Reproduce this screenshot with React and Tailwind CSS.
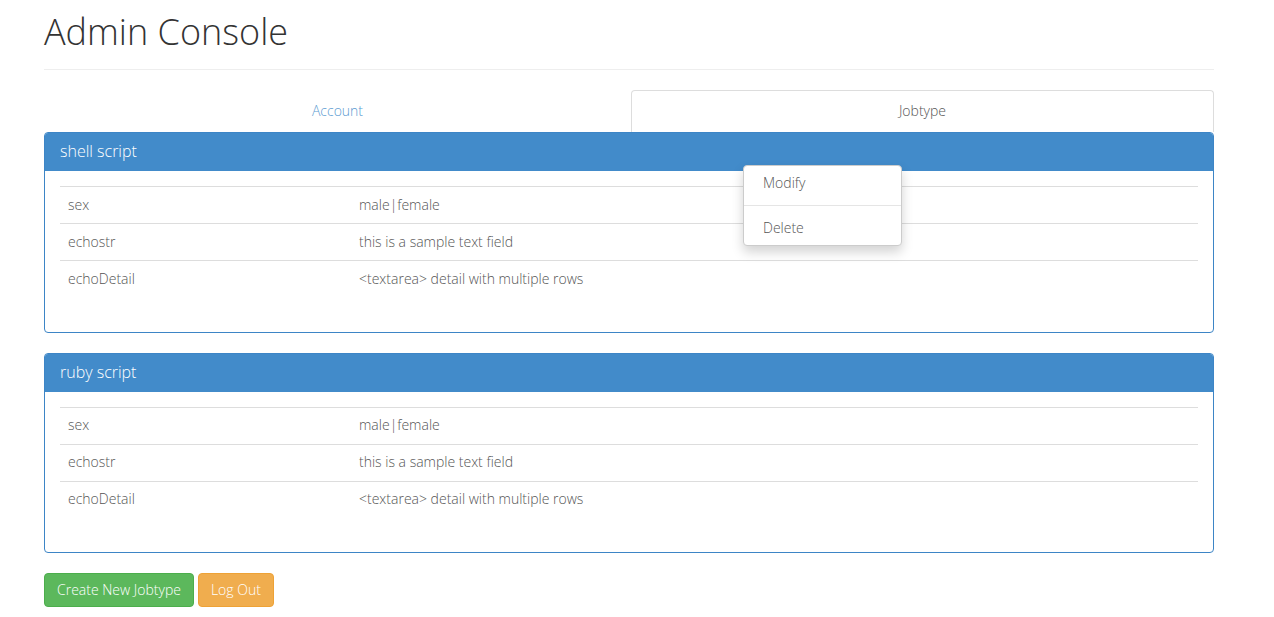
import React from "react";

const fields = [
  { name: "sex", value: "male|female" },
  { name: "echostr", value: "this is a sample text field" },
  { name: "echoDetail", value: "<textarea> detail with multiple rows" },
];

const JobPanel = ({ title }) => (
  <div className="mb-5 rounded border border-[#3d85c6] bg-white">
    <div className="flex h-[38px] items-center rounded-t-[3px] bg-[#428bca] px-[15px] pb-[2px] text-[16px] text-white">
      {title}
    </div>
    <div className="p-[15px]">
      <table className="mb-[19px] w-full border-collapse">
        <tbody>
          {fields.map((f) => (
            <tr key={f.name} className="border-t border-[#dddddd]">
              <td className="h-[37px] w-[291px] px-2 pb-[2px] align-middle">{f.name}</td>
              <td className="h-[37px] px-2 pb-[2px] align-middle">{f.value}</td>
            </tr>
          ))}
        </tbody>
      </table>
    </div>
  </div>
);

const App = () => {
  return (
    <div
      className="min-h-screen bg-white text-[14px] font-light text-[#555555]"
      style={{ fontFamily: '"Open Sans", "Noto Sans", sans-serif' }}
    >
      <div className="mx-auto w-[1170px] -translate-x-[8px]">
        <h1 className="pt-[10px] pb-[15px] text-[36px] leading-[44px] font-light text-[#333333]">
          Admin Console
        </h1>
        <div className="border-b border-[#eeeeee]" />
        <div className="mt-[20px] flex">
          <div className="flex h-[41px] w-[587px] items-center justify-center pb-[0px] text-[#5b9bd1]">
            Account
          </div>
          <div className="flex h-[42px] flex-1 items-center justify-center rounded-t border border-b-0 border-[#dddddd] bg-white pb-[2px] text-[#555555]">
            Jobtype
          </div>
        </div>
        <div className="relative">
          <JobPanel title="shell script" />
          <div className="absolute left-[699px] top-[33px] w-[159px] rounded border border-[#cccccc] bg-white py-[5px] shadow-[0_6px_12px_rgba(0,0,0,0.175)]">
            <div className="px-[19px] py-[2px] leading-[20px] text-[#555555]">Modify</div>
            <div className="my-[10px] border-t border-[#e5e5e5]" />
            <div className="px-[19px] py-[2px] leading-[20px] text-[#555555]">Delete</div>
          </div>
          <JobPanel title="ruby script" />
        </div>
        <div className="mt-[1px] flex gap-1">
          <button className="h-[34px] rounded border border-[#4cae4c] bg-[#5cb85c] px-3 pb-[2px] text-white">
            Create New Jobtype
          </button>
          <button className="h-[34px] rounded border border-[#eea236] bg-[#f0ad4e] px-3 pb-[2px] text-white">
            Log Out
          </button>
        </div>
      </div>
    </div>
  );
};

export default App;
